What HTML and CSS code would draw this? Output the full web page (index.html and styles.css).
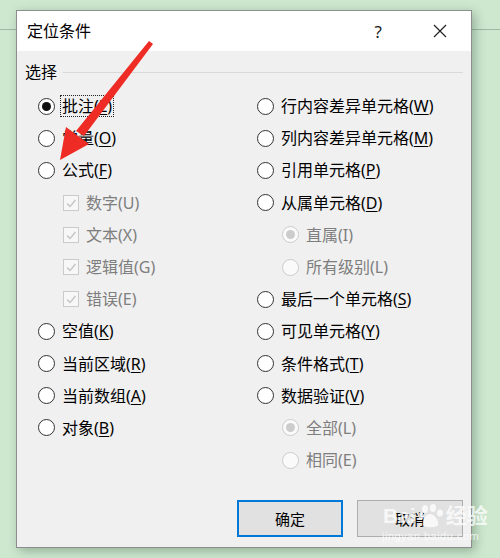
FILE: index.html
```html
<!DOCTYPE html>
<html lang="zh-CN">
<head>
    <meta charset="UTF-8">
    <title>定位条件</title>
    <link rel="stylesheet" href="styles.css">
</head>
<body>

<div class="sheet-line"></div>

<div class="dialog">
    <div class="titlebar">
        <span class="title">定位条件</span>
        <span class="help">?</span>
        <svg class="close" width="14" height="14" viewBox="0 0 14 14">
            <path d="M1 1 L13 13 M13 1 L1 13" stroke="#222" stroke-width="1.2" fill="none"/>
        </svg>
    </div>

    <div class="body">
        <div class="group-head">
            <span>选择</span>
            <div class="group-line"></div>
        </div>

        <div class="columns">
            <div class="col">
                <div class="row"><span class="radio on"></span><span class="label focus">批注(<u>L</u>)</span></div>
                <div class="row"><span class="radio"></span><span class="label">常量(<u>O</u>)</span></div>
                <div class="row"><span class="radio"></span><span class="label">公式(<u>F</u>)</span></div>
                <div class="row sub"><span class="check"><svg width="14" height="14" viewBox="0 0 14 14"><path d="M3 7.5 L6 10.5 L11.5 4" stroke="#c4c4c4" stroke-width="1.3" fill="none"/></svg></span><span class="label off">数字(U)</span></div>
                <div class="row sub"><span class="check"><svg width="14" height="14" viewBox="0 0 14 14"><path d="M3 7.5 L6 10.5 L11.5 4" stroke="#c4c4c4" stroke-width="1.3" fill="none"/></svg></span><span class="label off">文本(X)</span></div>
                <div class="row sub"><span class="check"><svg width="14" height="14" viewBox="0 0 14 14"><path d="M3 7.5 L6 10.5 L11.5 4" stroke="#c4c4c4" stroke-width="1.3" fill="none"/></svg></span><span class="label off">逻辑值(G)</span></div>
                <div class="row sub"><span class="check"><svg width="14" height="14" viewBox="0 0 14 14"><path d="M3 7.5 L6 10.5 L11.5 4" stroke="#c4c4c4" stroke-width="1.3" fill="none"/></svg></span><span class="label off">错误(E)</span></div>
                <div class="row"><span class="radio"></span><span class="label">空值(<u>K</u>)</span></div>
                <div class="row"><span class="radio"></span><span class="label">当前区域(<u>R</u>)</span></div>
                <div class="row"><span class="radio"></span><span class="label">当前数组(<u>A</u>)</span></div>
                <div class="row"><span class="radio"></span><span class="label">对象(<u>B</u>)</span></div>
            </div>

            <div class="col">
                <div class="row"><span class="radio"></span><span class="label">行内容差异单元格(<u>W</u>)</span></div>
                <div class="row"><span class="radio"></span><span class="label">列内容差异单元格(<u>M</u>)</span></div>
                <div class="row"><span class="radio"></span><span class="label">引用单元格(<u>P</u>)</span></div>
                <div class="row"><span class="radio"></span><span class="label">从属单元格(<u>D</u>)</span></div>
                <div class="row sub"><span class="radio dim on"></span><span class="label off">直属(I)</span></div>
                <div class="row sub"><span class="radio dim"></span><span class="label off">所有级别(L)</span></div>
                <div class="row"><span class="radio"></span><span class="label">最后一个单元格(<u>S</u>)</span></div>
                <div class="row"><span class="radio"></span><span class="label">可见单元格(<u>Y</u>)</span></div>
                <div class="row"><span class="radio"></span><span class="label">条件格式(<u>T</u>)</span></div>
                <div class="row"><span class="radio"></span><span class="label">数据验证(<u>V</u>)</span></div>
                <div class="row sub"><span class="radio dim on"></span><span class="label off">全部(L)</span></div>
                <div class="row sub"><span class="radio dim"></span><span class="label off">相同(E)</span></div>
            </div>
        </div>

        <div class="buttons">
            <button class="btn default">确定</button>
            <button class="btn">取消</button>
        </div>
    </div>
</div>

<div class="watermark">
    <div class="wm-logo">Bai<svg width="26" height="24" viewBox="0 0 26 24"><g fill="rgba(255,255,255,0.75)"><ellipse cx="7" cy="5" rx="3" ry="4"/><ellipse cx="15" cy="4" rx="3" ry="4"/><ellipse cx="22" cy="9" rx="3" ry="3.5"/><ellipse cx="3" cy="12" rx="2.5" ry="3.5"/><path d="M12 10 C7 10 4 17 5 21 C6 24 19 24 20 21 C21 17 17 10 12 10 Z"/></g></svg>经验</div>
    <div class="wm-url">jingyan.baidu.com</div>
</div>

<svg class="arrow" width="500" height="558" viewBox="0 0 500 558">
    <polygon points="149,41 153,44 84,136 76,131" fill="#ee2b24"/>
    <polygon points="60,160 66,127 89,144" fill="#ee2b24"/>
</svg>

</body>
</html>
```

FILE: styles.css
```css
body {
    margin: 0;
    width: 500px;
    height: 558px;
    overflow: hidden;
    background-color: #cde8cf;
    font-family: "Noto Sans", "Noto Sans CJK SC", sans-serif;
    position: relative;
}

.sheet-line {
    position: absolute;
    left: 0;
    top: 29px;
    width: 500px;
    height: 1px;
    background-color: #9fb6a2;
}

.dialog {
    position: relative;
    margin: 10px 0 0 16px;
    width: 456px;
    height: 538px;
    background-color: #f0f0f0;
    border: 1px solid #8a8f8b;
    box-sizing: border-box;
    box-shadow: 3px 3px 10px rgba(40, 70, 45, 0.35);
}

.titlebar {
    display: flex;
    align-items: center;
    height: 40px;
    background-color: #fff;
    padding: 0 0 0 10px;
}

.title {
    font-size: 16px;
    line-height: 20px;
    color: #000;
    flex: 1;
}

.help {
    font-size: 17px;
    color: #222;
    margin-right: 51px;
}

.close {
    margin-right: 24px;
}

.body {
    padding: 11px 8px 0 8px;
}

.group-head {
    display: flex;
    align-items: center;
    gap: 6px;
    font-size: 16px;
    line-height: 20px;
    color: #000;
}

.group-line {
    flex: 1;
    height: 1px;
    background-color: #d9d9d9;
}

.columns {
    display: grid;
    grid-template-columns: 219px 1fr;
    margin-top: 8px;
    padding-left: 13px;
}

.row {
    display: flex;
    align-items: center;
    height: 32.2px;
    gap: 6px;
    font-size: 16px;
}

.row.sub {
    padding-left: 25px;
}

.label {
    line-height: 20px;
    color: #000;
    white-space: nowrap;
    padding: 0 1px;
}

.label u {
    text-decoration-thickness: 1px;
    text-underline-offset: 2px;
}

.label.off {
    color: #7e7e7e;
}

.label.focus {
    outline: 1px dotted #222;
    outline-offset: 0;
    padding: 0 1px;
}

.radio {
    width: 17px;
    height: 17px;
    box-sizing: border-box;
    border: 1.6px solid #333;
    border-radius: 50%;
    background-color: #fff;
    display: flex;
    align-items: center;
    justify-content: center;
    flex-shrink: 0;
}

.radio.on::after {
    content: "";
    width: 9px;
    height: 9px;
    border-radius: 50%;
    background-color: #111;
}

.radio.dim {
    border-color: #cccccc;
    border-width: 1.2px;
    background-color: #fafafa;
}

.radio.dim.on::after {
    background-color: #cccccc;
}

.check {
    width: 16px;
    height: 16px;
    box-sizing: border-box;
    border: 1px solid #cbcbcb;
    background-color: #f7f7f7;
    display: flex;
    align-items: center;
    justify-content: center;
    flex-shrink: 0;
}

.buttons {
    position: absolute;
    right: 8px;
    bottom: 10px;
    display: flex;
    gap: 14px;
}

.btn {
    width: 106px;
    height: 37px;
    background-color: #e1e1e1;
    border: 1px solid #adadad;
    font-family: "Noto Sans", "Noto Sans CJK SC", sans-serif;
    font-size: 15px;
    color: #000;
    padding: 0;
}

.btn.default {
    border: 2px solid #0078d7;
}

.watermark {
    position: absolute;
    left: 383px;
    top: 503px;
    color: rgba(255, 255, 255, 0.75);
    font-family: "Liberation Sans", "Noto Sans CJK SC", sans-serif;
}

.wm-logo {
    display: flex;
    align-items: center;
    font-size: 21px;
    font-weight: bold;
    line-height: 26px;
}

.wm-logo svg {
    margin: 0 2px;
}

.wm-url {
    font-size: 11px;
    line-height: 14px;
    letter-spacing: 0.5px;
    margin-left: -1px;
}

.arrow {
    position: absolute;
    left: 0;
    top: 0;
    pointer-events: none;
}
```
